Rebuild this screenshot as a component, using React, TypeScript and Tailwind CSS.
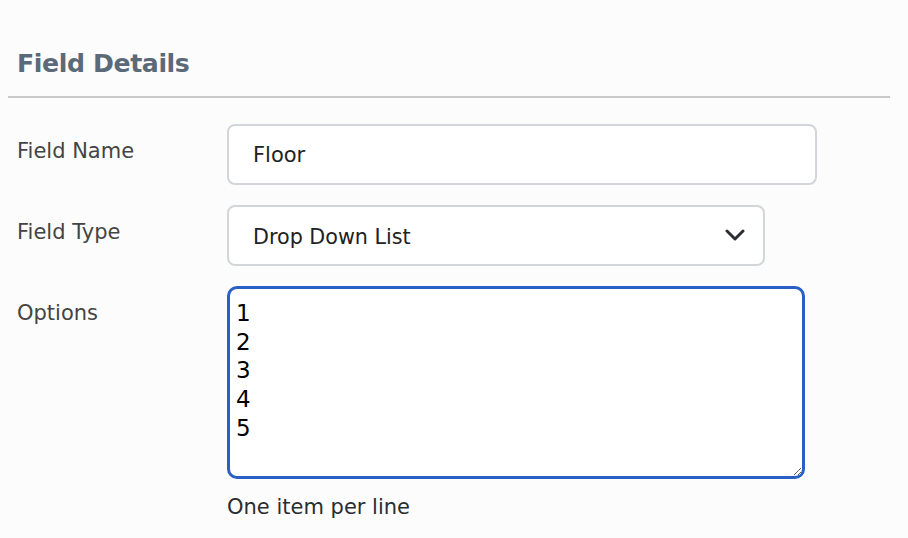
import { useState } from "react";

export default function App() {
  const [name, setName] = useState("Floor");
  const [options, setOptions] = useState("1\n2\n3\n4\n5");

  return (
    <div
      className="w-[908px] h-[538px] bg-[#fcfcfc] overflow-hidden"
      style={{ fontFamily: '"DejaVu Sans", Verdana, sans-serif' }}
    >
      {/* Section header */}
      <div className="pt-[49px] pl-[8px] pr-[18px]">
        <h2 className="pl-[9px] text-[25.2px] leading-[29px] font-bold text-[#5a6a78] tracking-[-0.4px]">
          Field Details
        </h2>
        <div className="mt-[18px] h-[2px] bg-[#c8c8c8]" />
      </div>

      {/* Form */}
      <div className="mt-[26px] pl-[17px] grid grid-cols-[210px_1fr] gap-y-[20px] items-start">
        <label className="pt-[13px] text-[21px] leading-[29px] text-[#444]">Field Name</label>
        <input
          value={name}
          onChange={(e) => setName(e.target.value)}
          className="w-[590px] h-[61px] px-[24px] rounded-[8px] border-2 border-[#d2d6da] bg-white text-[21px] text-[#222] outline-none"
        />

        <label className="pt-[13px] text-[21px] leading-[29px] text-[#444]">Field Type</label>
        <div className="relative w-[538px] h-[61px]">
          <select
            defaultValue="dropdown"
            className="appearance-none w-full h-full px-[24px] pt-[4px] rounded-[8px] border-2 border-[#d2d6da] bg-white text-[20.7px] text-[#222] outline-none"
          >
            <option value="text">Text</option>
            <option value="dropdown">Drop Down List</option>
          </select>
          <svg
            className="absolute right-[20px] top-[24px] pointer-events-none"
            width="20"
            height="12"
            viewBox="0 0 20 12"
            fill="none"
          >
            <path d="M2 2l8 8 8-8" stroke="#2b2f33" strokeWidth="3" strokeLinecap="round" strokeLinejoin="round" />
          </svg>
        </div>

        <label className="pt-[13px] text-[21px] leading-[29px] text-[#444]">Options</label>
        <div className="flex flex-col">
          <textarea
            value={options}
            onChange={(e) => setOptions(e.target.value)}
            className="block w-[578px] h-[193px] px-[6px] pt-[10px] rounded-[10px] border-[3px] border-[#2a5fc6] bg-white text-[23px] leading-[28.7px] text-black outline-none"
          />
          <span className="mt-[14px] text-[21px] leading-[29px] text-[#2a2d31]">One item per line</span>
        </div>
      </div>
    </div>
  );
}
